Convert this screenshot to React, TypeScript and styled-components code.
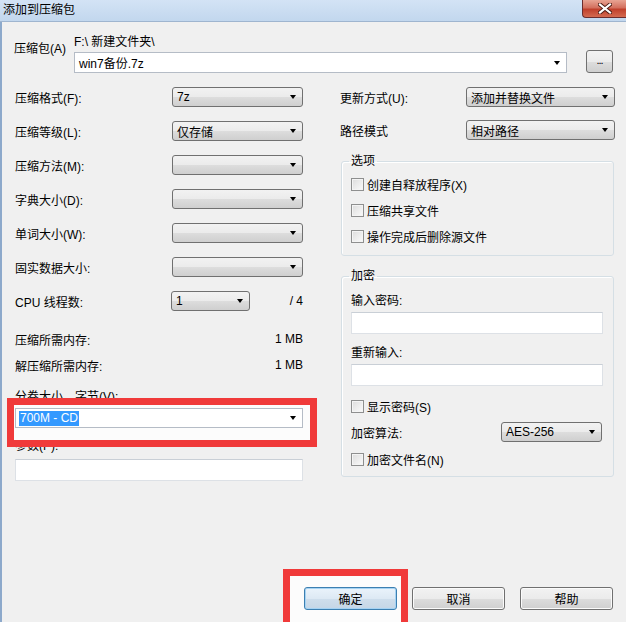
import React from 'react';
import styled, { createGlobalStyle } from 'styled-components';

const GlobalStyle = createGlobalStyle`
  html, body {
    margin: 0;
    padding: 0;
    background: #f0f0f0;
  }
  body {
    font-family: "Liberation Sans", "Noto Sans CJK SC", sans-serif;
    font-size: 12px;
    color: #000;
  }
`;

const Window = styled.div`
  width: 626px;
  height: 622px;
  display: flex;
  flex-direction: column;
  overflow: hidden;
  background: #f0f0f0;
`;

const TitleBar = styled.div`
  height: 22px;
  box-sizing: border-box;
  display: flex;
  align-items: flex-start;
  justify-content: space-between;
  background: linear-gradient(#d3e3f5, #c2d7ee);
  border-bottom: 1px solid #9fb5cf;
  padding-left: 3px;
`;

const Title = styled.span`
  line-height: 21px;
  font-size: 12px;
  color: #000;
`;

const CloseButton = styled.div`
  width: 44px;
  height: 18px;
  box-sizing: border-box;
  display: flex;
  align-items: center;
  justify-content: center;
  border: 1px solid #6b2d2d;
  border-top: none;
  border-right: none;
  border-bottom-left-radius: 4px;
  background: linear-gradient(#e8a493 0%, #d3705e 45%, #c0402c 55%, #d46a50 100%);
`;

const Body = styled.div`
  flex: 1;
  display: flex;
  flex-direction: column;
  border-left: 2px solid #8da9cb;
  padding: 13px 12px 12px 13px;
`;

const ArchiveRow = styled.div`
  display: grid;
  grid-template-columns: 60px 493px 46px;
  margin-left: -1px;
`;

const ArchiveLabel = styled.span`
  line-height: 14px;
  margin-top: 7px;
`;

const PathStack = styled.div`
  display: flex;
  flex-direction: column;
  gap: 3px;
`;

const PathText = styled.span`
  line-height: 14px;
`;

const BrowseButton = styled.div`
  justify-self: end;
  width: 27px;
  margin-top: 15px;
  height: 23px;
  box-sizing: border-box;
  border: 1px solid #707070;
  border-radius: 3px;
  background: linear-gradient(#f2f2f2 0%, #ebebeb 50%, #dddddd 51%, #cfcfcf 100%);
  display: flex;
  align-items: center;
  justify-content: center;
  font-size: 11px;
  letter-spacing: -1px;
  padding-bottom: 3px;
`;

const Columns = styled.div`
  display: grid;
  grid-template-columns: 288px 274px;
  column-gap: 37px;
  margin-top: 14px;
`;

const Column = styled.div`
  display: flex;
  flex-direction: column;
`;

const FieldStack = styled.div`
  display: flex;
  flex-direction: column;
  gap: 14px;
`;

const FieldRow = styled.div<{ $label: number; $control: number }>`
  display: grid;
  grid-template-columns: ${p => p.$label}px ${p => p.$control}px 1fr;
  align-items: center;
  height: 20px;
`;

const Trailing = styled.span`
  text-align: right;
`;

const Combo = styled.div<{ $white?: boolean }>`
  position: relative;
  z-index: 1;
  height: 20px;
  box-sizing: border-box;
  display: flex;
  align-items: center;
  padding: 0 16px 0 4px;
  border: 1px solid ${p => (p.$white ? '#b5bcc6' : '#707070')};
  border-radius: ${p => (p.$white ? '0' : '3px')};
  background: ${p =>
    p.$white
      ? '#fff'
      : 'linear-gradient(#f2f2f2 0%, #ebebeb 50%, #dddddd 51%, #cfcfcf 100%)'};
  white-space: nowrap;

  &::after {
    content: '';
    position: absolute;
    right: 6px;
    top: 50%;
    margin-top: -2px;
    border-left: 3.5px solid transparent;
    border-right: 3.5px solid transparent;
    border-top: 4px solid #000;
  }
`;

const Selected = styled.span`
  background: #3399ff;
  color: #fff;
  line-height: 15px;
  padding: 0 1px;
  margin-left: -1px;
`;

const InfoRow = styled.div`
  display: flex;
  justify-content: space-between;
  align-items: center;
  height: 26px;
`;

const InfoBlock = styled.div`
  margin-top: 15px;
`;

const Label = styled.span<{ $top: number }>`
  display: block;
  line-height: 14px;
  margin-top: ${p => p.$top}px;
`;

const TextBox = styled.div<{ $top: number }>`
  height: 22px;
  box-sizing: border-box;
  margin-top: ${p => p.$top}px;
  background: #fff;
  border: 1px solid #dde1e6;
  border-top-color: #c9cfd6;
`;

const Highlight = styled.div<{ $top: number; $left: number; $width: number; $height: number }>`
  position: absolute;
  z-index: 0;
  top: ${p => p.$top}px;
  left: ${p => p.$left}px;
  width: ${p => p.$width}px;
  height: ${p => p.$height}px;
  box-sizing: border-box;
  border: 7px solid #f03a3a;
  background: #fcfcfc;
`;

const Anchor = styled.div<{ $top: number }>`
  position: relative;
  margin-top: ${p => p.$top}px;
`;

const SpacedRow = styled.div<{ $top?: number }>`
  display: grid;
  grid-template-columns: 126px 149px;
  align-items: center;
  height: 20px;
  margin-top: ${p => p.$top ?? 0}px;
`;

const Group = styled.fieldset<{ $top: number }>`
  margin: ${p => p.$top}px 0 0 1px;
  padding: 0 10px 0 9px;
  min-width: 0;
  border: 1px solid #d5dfe5;
  border-radius: 3px;
  box-shadow: inset 1px 1px 0 #fff;
`;

const Legend = styled.legend`
  padding: 0 2px;
  margin-left: -2px;
  line-height: 14px;
  font-size: 12px;
`;

const CheckList = styled.div`
  display: flex;
  flex-direction: column;
  gap: 6px;
  padding: 6px 0 9px;
`;

const CheckRow = styled.label<{ $top?: number; $bottom?: number }>`
  display: flex;
  align-items: center;
  gap: 3px;
  height: 20px;
  margin-top: ${p => p.$top ?? 0}px;
  margin-bottom: ${p => p.$bottom ?? 0}px;
`;

const Box = styled.span`
  width: 13px;
  height: 13px;
  box-sizing: border-box;
  border: 1px solid #8e8f8f;
  background: linear-gradient(135deg, #dcdcdc, #fbfbfb);
  box-shadow: inset 0 0 0 1px #f4f4f4;
`;

const AlgoRow = styled.div`
  display: grid;
  grid-template-columns: 150px 101px;
  align-items: center;
  height: 20px;
  margin-top: 6px;
`;

const ButtonBar = styled.div`
  margin-top: auto;
  display: flex;
  justify-content: flex-end;
  gap: 15px;
  padding-right: 1px;
`;

const Button = styled.div<{ $default?: boolean }>`
  position: relative;
  z-index: 1;
  width: 93px;
  height: 23px;
  box-sizing: border-box;
  display: flex;
  align-items: center;
  justify-content: center;
  border: 1px solid ${p => (p.$default ? '#3c7fb1' : '#707070')};
  border-radius: 3px;
  background: ${p =>
    p.$default
      ? 'linear-gradient(#eaf3fb 0%, #dde9f4 50%, #cfdeec 51%, #c5d6e6 100%)'
      : 'linear-gradient(#f2f2f2 0%, #ebebeb 50%, #dddddd 51%, #cfcfcf 100%)'};
  box-shadow: ${p => (p.$default ? 'inset 0 0 0 1px #a6d3f3' : 'inset 0 0 0 1px #fbfbfb')};
`;

const ButtonSlot = styled.div`
  position: relative;
`;

const CloseGlyph = () => (
  <svg width="14" height="11" viewBox="0 0 14 11">
    <path d="M2 1.5 L12 9.5 M12 1.5 L2 9.5" stroke="#4a1a12" strokeWidth="4" strokeLinecap="square" />
    <path d="M2 1.5 L12 9.5 M12 1.5 L2 9.5" stroke="#fff" strokeWidth="2.2" strokeLinecap="square" />
  </svg>
);

const leftCombos: [string, string][] = [
  ['压缩格式(F):', '7z'],
  ['压缩等级(L):', '仅存储'],
  ['压缩方法(M):', ''],
  ['字典大小(D):', ''],
  ['单词大小(W):', ''],
  ['固实数据大小:', ''],
];

const options = ['创建自释放程序(X)', '压缩共享文件', '操作完成后删除源文件'];

const App: React.FC = () => {
  return (
    <>
      <GlobalStyle />
      <Window>
        <TitleBar>
          <Title>添加到压缩包</Title>
          <CloseButton>
            <CloseGlyph />
          </CloseButton>
        </TitleBar>
        <Body>
          <ArchiveRow>
            <ArchiveLabel>压缩包(A)</ArchiveLabel>
            <PathStack>
              <PathText>F:\ 新建文件夹\</PathText>
              <Combo $white style={{ height: 21 }}>win7备份.7z</Combo>
            </PathStack>
            <BrowseButton>...</BrowseButton>
          </ArchiveRow>

          <Columns>
            <Column>
              <FieldStack>
                {leftCombos.map(([label, value]) => (
                  <FieldRow key={label} $label={157} $control={131}>
                    <span>{label}</span>
                    <Combo>{value}</Combo>
                  </FieldRow>
                ))}
                <FieldRow $label={156} $control={79}>
                  <span>CPU 线程数:</span>
                  <Combo>1</Combo>
                  <Trailing>/ 4</Trailing>
                </FieldRow>
              </FieldStack>

              <InfoBlock>
                <InfoRow>
                  <span>压缩所需内存:</span>
                  <span>1 MB</span>
                </InfoRow>
                <InfoRow>
                  <span>解压缩所需内存:</span>
                  <span>1 MB</span>
                </InfoRow>
              </InfoBlock>

              <Label $top={12}>分卷大小，字节(V):</Label>
              <Anchor $top={4}>
                <Highlight $top={-10} $left={-8} $width={310} $height={49} />
                <Combo $white>
                  <Selected>700M - CD</Selected>
                </Combo>
              </Anchor>
              <Label $top={11}>参数(P):</Label>
              <TextBox $top={6} />
            </Column>

            <Column>
              <SpacedRow>
                <span>更新方式(U):</span>
                <Combo>添加并替换文件</Combo>
              </SpacedRow>
              <SpacedRow $top={13}>
                <span>路径模式</span>
                <Combo>相对路径</Combo>
              </SpacedRow>

              <Group $top={14}>
                <Legend>选项</Legend>
                <CheckList>
                  {options.map(o => (
                    <CheckRow key={o}>
                      <Box />
                      <span>{o}</span>
                    </CheckRow>
                  ))}
                </CheckList>
              </Group>

              <Group $top={13}>
                <Legend>加密</Legend>
                <Label $top={11}>输入密码:</Label>
                <TextBox $top={4} />
                <Label $top={12}>重新输入:</Label>
                <TextBox $top={4} />
                <CheckRow $top={10}>
                  <Box />
                  <span>显示密码(S)</span>
                </CheckRow>
                <AlgoRow>
                  <span>加密算法:</span>
                  <Combo>AES-256</Combo>
                </AlgoRow>
                <CheckRow $top={7} $bottom={7}>
                  <Box />
                  <span>加密文件名(N)</span>
                </CheckRow>
              </Group>
            </Column>
          </Columns>

          <ButtonBar>
            <ButtonSlot>
              <Highlight $top={-18} $left={-21} $width={125} $height={60} />
              <Button $default>确定</Button>
            </ButtonSlot>
            <Button>取消</Button>
            <Button>帮助</Button>
          </ButtonBar>
        </Body>
      </Window>
    </>
  );
};

export default App;
